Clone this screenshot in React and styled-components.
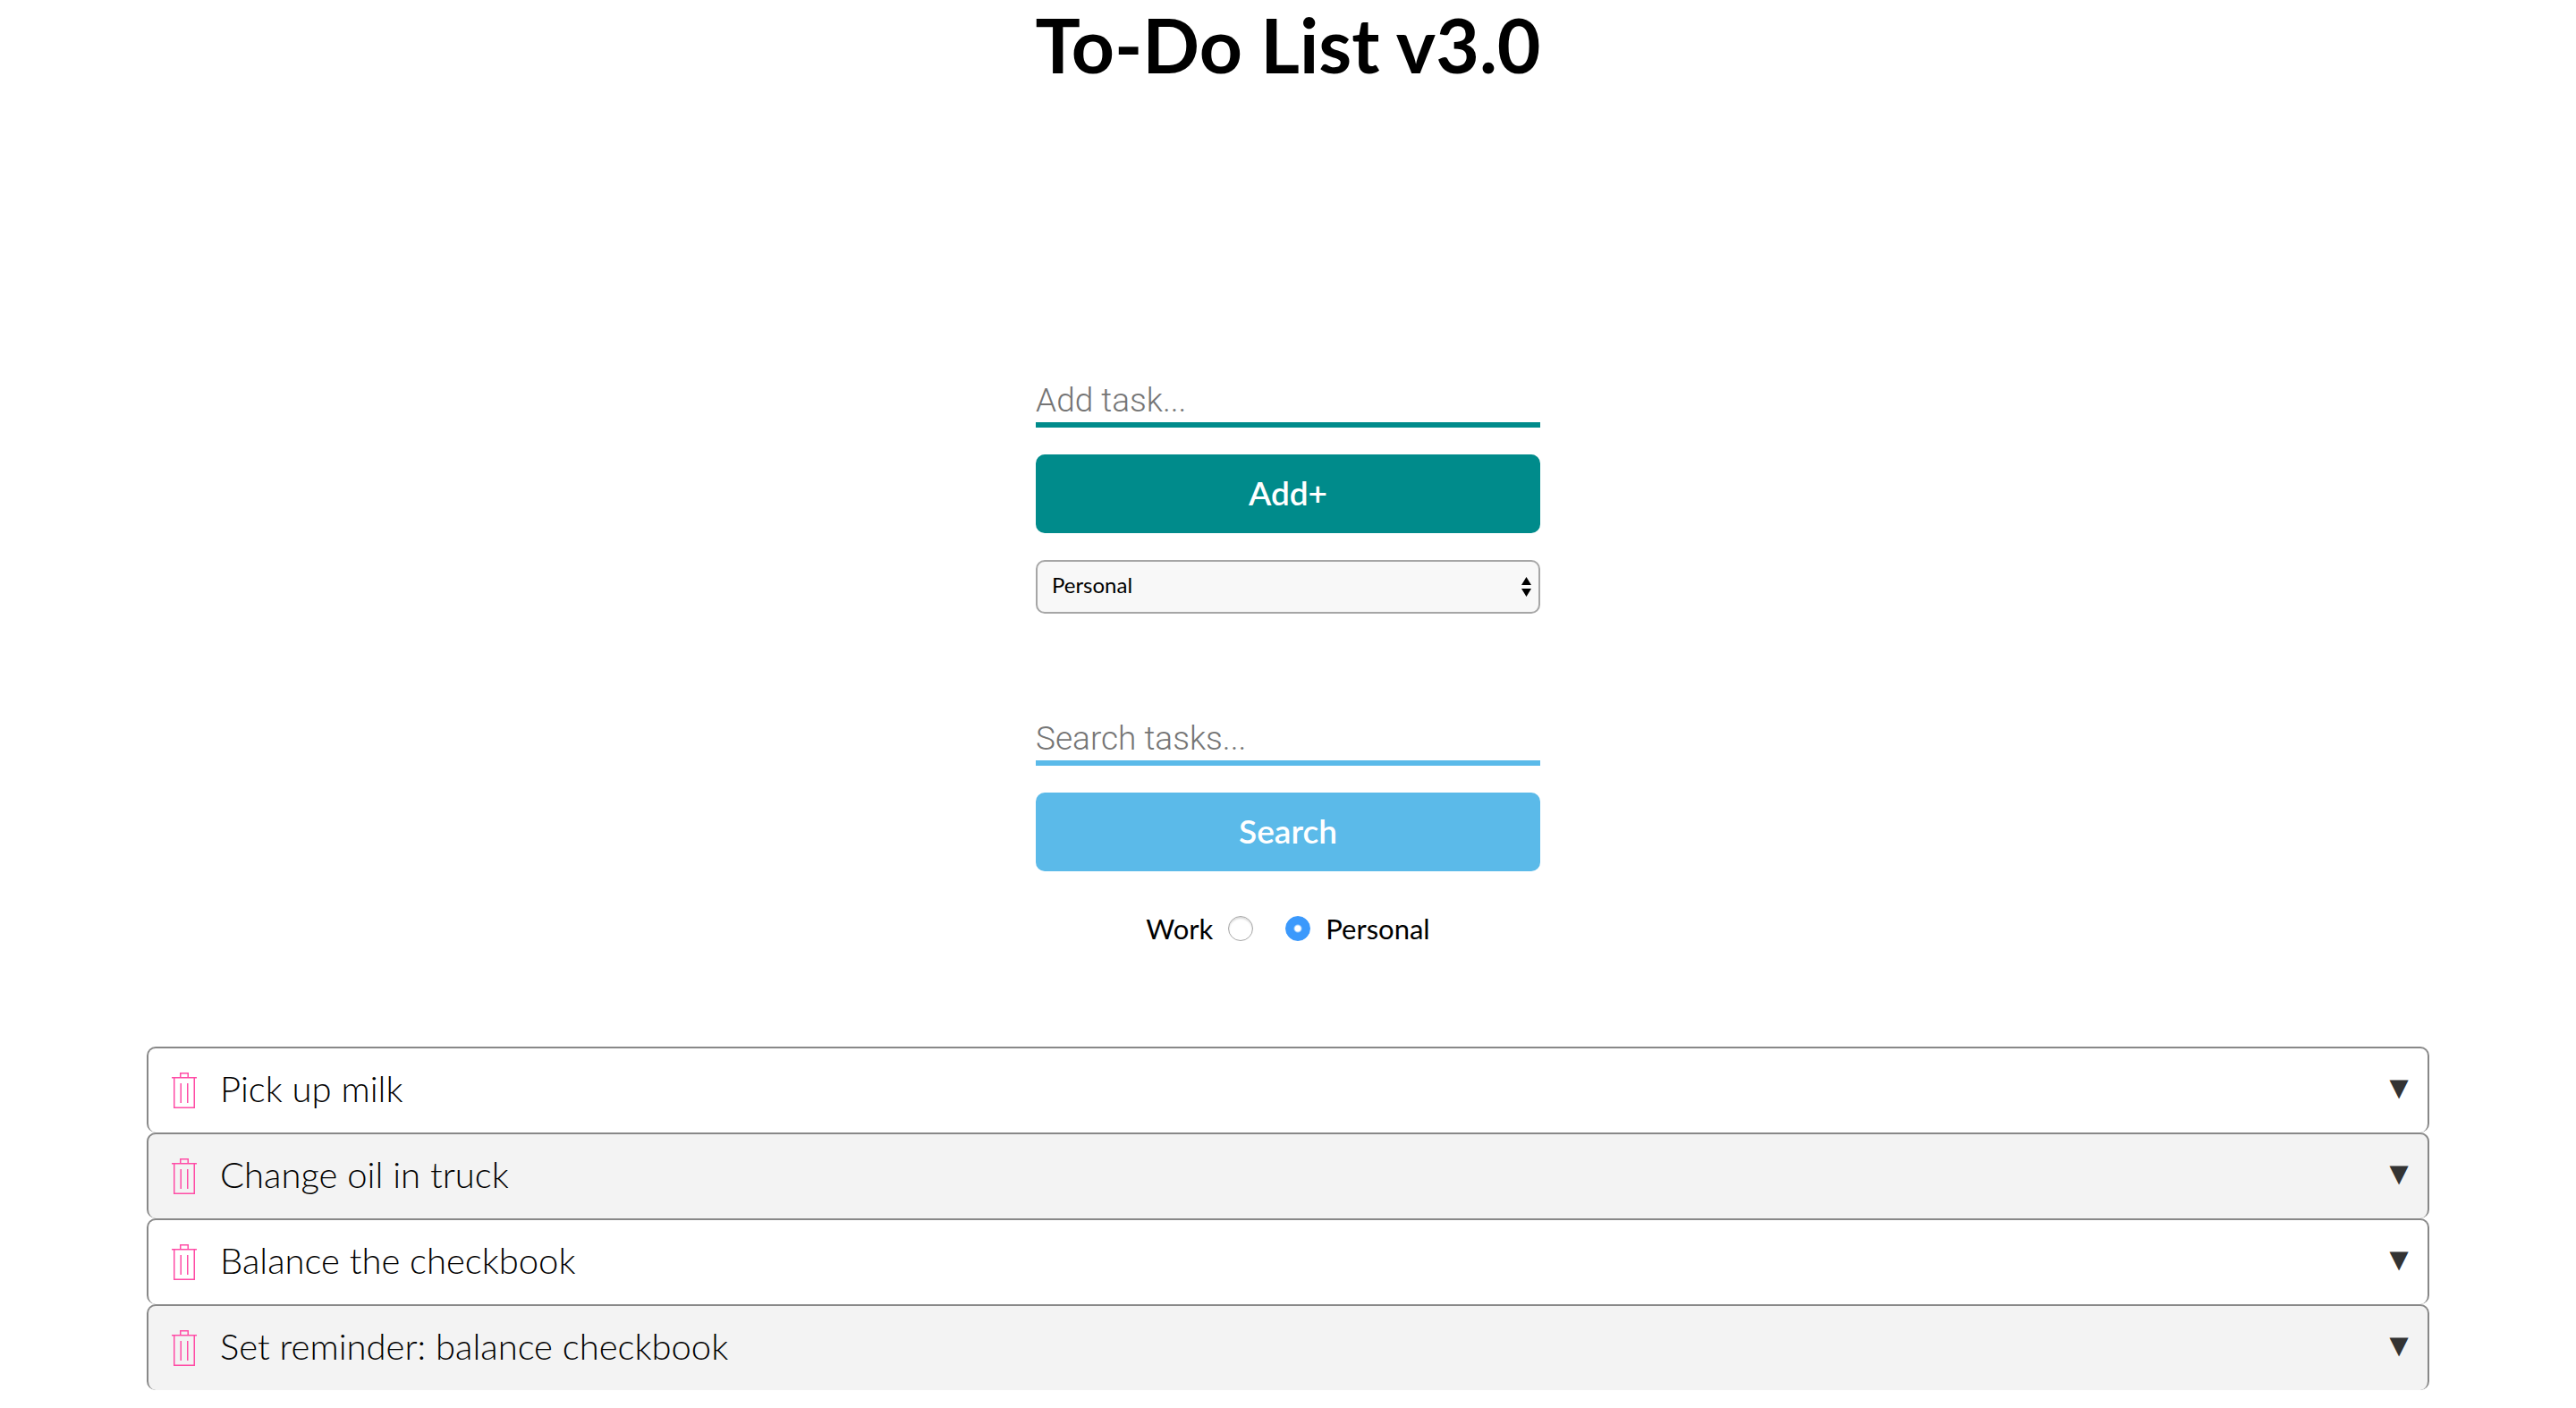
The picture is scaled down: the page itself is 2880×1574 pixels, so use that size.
import React, { useState } from "react";
import styled, { createGlobalStyle } from "styled-components";

const GlobalStyle = createGlobalStyle`
  *, *::before, *::after { box-sizing: border-box; }
  body {
    margin: 0;
    background: #fff;
    color: #000;
    font-family: Lato, "Open Sans", sans-serif;
  }
  button, input, select { font: inherit; color: inherit; margin: 0; }
`;

const Page = styled.main`
  display: flex;
  flex-direction: column;
  align-items: center;
`;

const Title = styled.h1`
  margin: 0;
  font-size: 84px;
  line-height: 100px;
  font-weight: 700;
  white-space: nowrap;
`;

const Controls = styled.div`
  display: flex;
  flex-direction: column;
  gap: 110px;
  width: 564px;
  max-width: 100%;
  margin-top: 318px;
`;

const Form = styled.form`
  display: flex;
  flex-direction: column;
  gap: 30px;
`;

const TextField = styled.input`
  width: 100%;
  height: 60px;
  padding: 4px 0 0;
  border: 0;
  border-bottom: 6px solid ${(p) => p.$accent};
  outline: 0;
  background: none;
  font-family: Roboto, "Liberation Sans", sans-serif;
  font-size: 37px;
  font-weight: 300;
  &::placeholder { color: #757575; opacity: 1; }
`;

const SubmitButton = styled.button`
  height: 88px;
  padding: 0 0 4px;
  border: 0;
  border-radius: 10px;
  background: ${(p) => p.$accent};
  color: #fff;
  font-size: 37px;
  font-weight: 600;
  cursor: pointer;
`;

const SelectBox = styled.div`
  position: relative;
  display: flex;
`;

const Select = styled.select`
  width: 100%;
  height: 60px;
  padding: 0 40px 6px 16px;
  border: 2px solid #a6a6a6;
  border-radius: 10px;
  background: #f8f8f8;
  appearance: none;
  font-size: 24px;
`;

const SelectArrows = styled.svg`
  position: absolute;
  top: 19px;
  right: 10px;
  pointer-events: none;
`;

const RadioRow = styled.div`
  display: flex;
  justify-content: center;
  gap: 36px;
  padding-top: 16px;
`;

const RadioLabel = styled.label`
  display: flex;
  align-items: center;
  gap: 17px;
  height: 36px;
  font-size: 31px;
  line-height: 36px;
`;

const Radio = styled.input`
  width: 28px;
  height: 28px;
  border: 1px solid #a8a8a8;
  border-radius: 50%;
  appearance: none;
  background: #fff;
  box-shadow: inset 0 2px 2px #dcdcdc;
  &:checked {
    border-color: #3b99fc;
    background: radial-gradient(circle, #fff 3px, #3b99fc 5px);
    box-shadow: none;
  }
`;

const TaskList = styled.ul`
  align-self: stretch;
  margin: 114px 164px 0;
  padding: 0;
  list-style: none;
`;

const Task = styled.li`
  display: flex;
  align-items: center;
  gap: 26px;
  height: 96px;
  padding: 0 14px 0 26px;
  border: 2px solid #888;
  border-bottom: 0;
  border-radius: 10px;
  font-size: 40px;
  line-height: 48px;
  font-weight: 300;
  &:nth-child(even) { background: #f3f3f3; }
`;

const TaskName = styled.span`
  flex: 1;
  padding-bottom: 4px;
`;

const IconButton = styled.button`
  display: flex;
  padding: 0;
  border: 0;
  background: none;
  cursor: pointer;
`;

const ExpandButton = styled(IconButton)`
  padding-bottom: 6px;
  color: #333;
  font-family: "DejaVu Sans", sans-serif;
  font-size: 36px;
  line-height: 36px;
`;

function TrashIcon() {
  return (
    <svg width="28" height="40" viewBox="0 0 28 40" fill="none" stroke="#ff4da6" strokeWidth="1.5" aria-hidden="true">
      <path d="M0 5.75H28" />
      <path d="M2.75 5.75V39.25H25.25V5.75" />
      <path d="M9.75 5.75V.75H18.25V5.75" />
      <path d="M10.25 12V34M17.75 12V34" />
    </svg>
  );
}

const tasks = [
  "Pick up milk",
  "Change oil in truck",
  "Balance the checkbook",
  "Set reminder: balance checkbook",
];

export default function App() {
  const [filter, setFilter] = useState("personal");
  const stay = (e) => e.preventDefault();
  return (
    <Page>
      <GlobalStyle />
      <Title>To-Do List v3.0</Title>
      <Controls>
        <Form onSubmit={stay}>
          <TextField $accent="#008b8b" placeholder="Add task..." aria-label="Add task" />
          <SubmitButton $accent="#008b8b">Add+</SubmitButton>
          <SelectBox>
            <Select aria-label="Category" defaultValue="Personal">
              <option>Personal</option>
              <option>Work</option>
            </Select>
            <SelectArrows width="11" height="23" viewBox="0 0 11 23" aria-hidden="true">
              <path d="M5.5 0L11 9H0ZM0 13H11L5.5 22Z" />
            </SelectArrows>
          </SelectBox>
        </Form>
        <Form onSubmit={stay}>
          <TextField $accent="#5bbae9" placeholder="Search tasks..." aria-label="Search tasks" />
          <SubmitButton $accent="#5bbae9">Search</SubmitButton>
          <RadioRow>
            <RadioLabel>
              Work
              <Radio type="radio" name="filter" checked={filter === "work"} onChange={() => setFilter("work")} />
            </RadioLabel>
            <RadioLabel>
              <Radio type="radio" name="filter" checked={filter === "personal"} onChange={() => setFilter("personal")} />
              Personal
            </RadioLabel>
          </RadioRow>
        </Form>
      </Controls>
      <TaskList>
        {tasks.map((name) => (
          <Task key={name}>
            <IconButton aria-label={`Delete ${name}`}><TrashIcon /></IconButton>
            <TaskName>{name}</TaskName>
            <ExpandButton aria-label={`Expand ${name}`}>▼</ExpandButton>
          </Task>
        ))}
      </TaskList>
    </Page>
  );
}
